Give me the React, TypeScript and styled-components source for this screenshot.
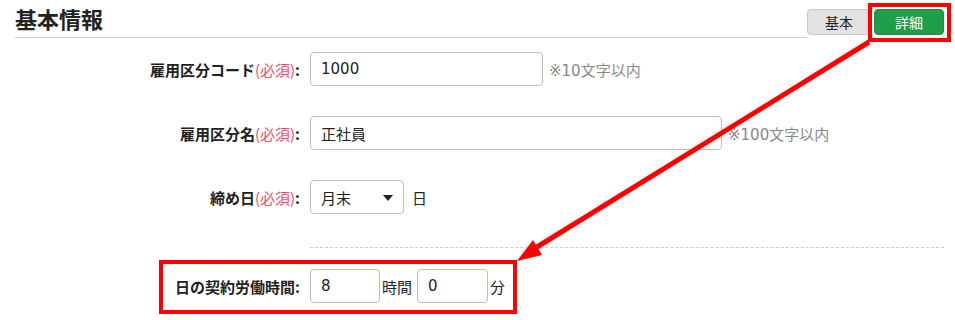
import React from 'react';
import styled, { createGlobalStyle } from 'styled-components';

const GlobalStyle = createGlobalStyle`
  body {
    margin: 0;
    background: #fff;
    color: #222;
    font-family: "Noto Sans CJK JP", "Noto Sans", sans-serif;
  }
`;

const latinFirst = `"DejaVu Sans", "Noto Sans CJK JP", sans-serif`;

const Page = styled.div`
  position: relative;
  width: 955px;
  height: 320px;
  padding: 0 11px 0 15px;
  box-sizing: border-box;
  overflow: hidden;
`;

const Header = styled.div`
  display: flex;
  align-items: flex-start;
`;

const Title = styled.h2`
  flex: 1;
  margin: 0;
  height: 37px;
  line-height: 37px;
  border-bottom: 1px solid #ccc;
  font-size: 22px;
  font-weight: bold;
  color: #222;
`;

const ButtonGroup = styled.div`
  display: flex;
  gap: 3px;
  margin-top: 9px;
`;

const TabButton = styled.button<{ $active?: boolean; $width: number }>`
  width: ${p => p.$width}px;
  height: 26px;
  padding: 0;
  border-radius: 4px;
  border: 1px solid ${p => (p.$active ? '#1b8f41' : '#c8c8c8')};
  background: ${p => (p.$active ? '#1f9e49' : '#e2e2e2')};
  color: ${p => (p.$active ? '#fff' : '#222')};
  font-family: inherit;
  font-size: 14px;
  cursor: pointer;
`;

const Form = styled.div`
  display: flex;
  flex-direction: column;
  padding-top: 14px;
`;

const Rows = styled.div`
  display: flex;
  flex-direction: column;
  gap: 30px;
`;

const Row = styled.div`
  display: grid;
  grid-template-columns: 285px 1fr;
  column-gap: 10px;
  align-items: center;
  height: 34px;
`;

const Label = styled.label`
  text-align: right;
  font-size: 15px;
  font-weight: bold;
  color: #222;
  white-space: nowrap;
`;

const Required = styled.span`
  color: #ea4f68;
  font-weight: normal;
`;

const Field = styled.div`
  display: flex;
  align-items: center;
`;

const TextInput = styled.input<{ $width: number }>`
  width: ${p => p.$width}px;
  height: 34px;
  box-sizing: border-box;
  padding: 0 10px;
  border: 1px solid #bdbdbd;
  border-radius: 4px;
  font-family: ${latinFirst};
  font-size: 15px;
  color: #222;
  outline: none;
`;

const Hint = styled.span`
  margin-left: 6px;
  font-family: ${latinFirst};
  font-size: 15px;
  color: #888;
`;

const Unit = styled.span<{ $before: number; $after?: number }>`
  margin-left: ${p => p.$before}px;
  margin-right: ${p => p.$after ?? 0}px;
  font-size: 15px;
  color: #222;
`;

const SelectWrap = styled.div`
  position: relative;
  width: 94px;
  height: 34px;

  &::after {
    content: '';
    position: absolute;
    right: 11px;
    top: 15px;
    border-left: 5px solid transparent;
    border-right: 5px solid transparent;
    border-top: 6px solid #222;
    pointer-events: none;
  }
`;

const Select = styled.select`
  appearance: none;
  width: 100%;
  height: 100%;
  box-sizing: border-box;
  padding: 0 10px;
  border: 1px solid #bdbdbd;
  border-radius: 4px;
  background: #fff;
  font-family: inherit;
  font-size: 15px;
  color: #222;
`;

const Divider = styled.hr`
  margin: 33px 0 21px 295px;
  border: none;
  border-top: 1px dashed #ccc;
`;

const Annotation = styled.svg`
  position: absolute;
  left: 0;
  top: 0;
  pointer-events: none;
`;

export default function App() {
  return (
    <>
      <GlobalStyle />
      <Page>
        <Header>
          <Title>基本情報</Title>
          <ButtonGroup>
            <TabButton $width={64}>基本</TabButton>
            <TabButton $width={70} $active>
              詳細
            </TabButton>
          </ButtonGroup>
        </Header>

        <Form>
          <Rows>
            <Row>
              <Label>
                雇用区分コード<Required>(必須)</Required>:
              </Label>
              <Field>
                <TextInput $width={233} defaultValue="1000" />
                <Hint>※10文字以内</Hint>
              </Field>
            </Row>
            <Row>
              <Label>
                雇用区分名<Required>(必須)</Required>:
              </Label>
              <Field>
                <TextInput $width={412} defaultValue="正社員" />
                <Hint>※100文字以内</Hint>
              </Field>
            </Row>
            <Row>
              <Label>
                締め日<Required>(必須)</Required>:
              </Label>
              <Field>
                <SelectWrap>
                  <Select defaultValue="end">
                    <option value="end">月末</option>
                  </Select>
                </SelectWrap>
                <Unit $before={8}>日</Unit>
              </Field>
            </Row>
          </Rows>

          <Divider />

          <Row>
            <Label>日の契約労働時間:</Label>
            <Field>
              <TextInput $width={70} defaultValue="8" />
              <Unit $before={2} $after={5}>
                時間
              </Unit>
              <TextInput $width={71} defaultValue="0" />
              <Unit $before={2}>分</Unit>
            </Field>
          </Row>
        </Form>

        <Annotation width="955" height="320" viewBox="0 0 955 320">
          <rect x="870" y="5" width="79" height="35" fill="none" stroke="#ff0000" strokeWidth="4" />
          <rect x="161" y="262" width="354" height="50" fill="none" stroke="#ff0000" strokeWidth="4" />
          <line x1="869" y1="42" x2="537" y2="247" stroke="#ff0000" strokeWidth="5" />
          <polygon points="517,261 542,255 533,240" fill="#ff0000" />
        </Annotation>
      </Page>
    </>
  );
}
